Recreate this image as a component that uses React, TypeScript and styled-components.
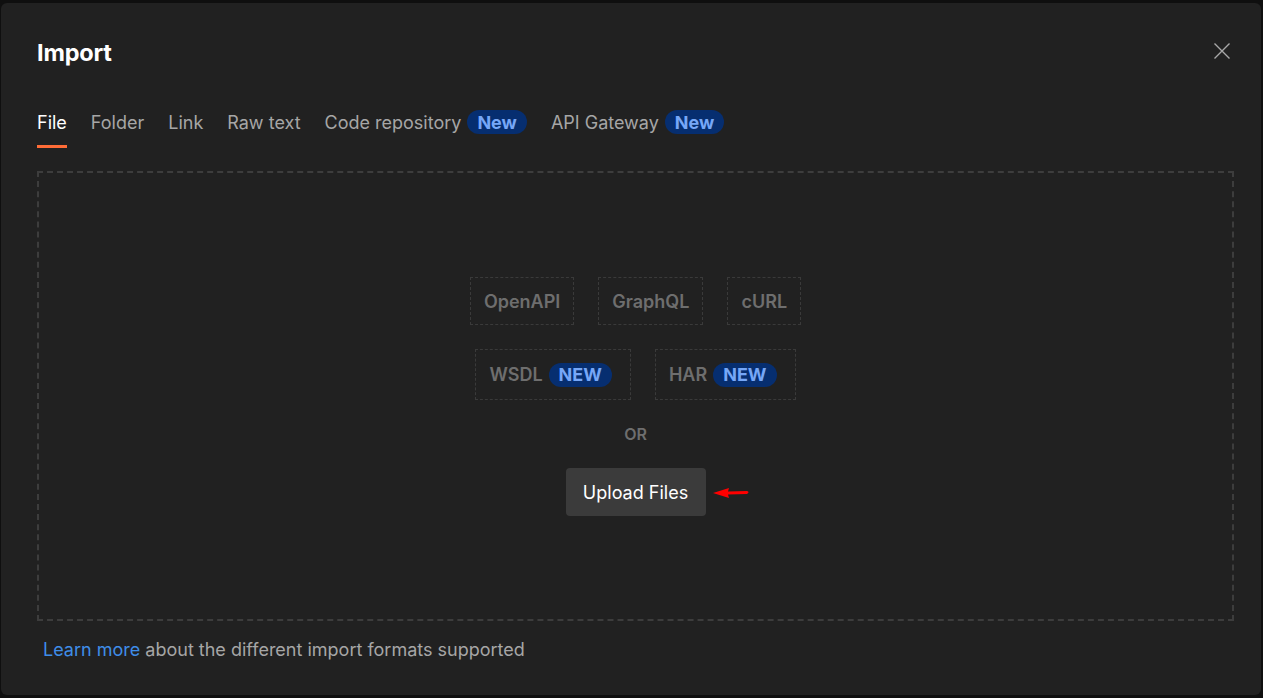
import React from "react";
import styled, { createGlobalStyle } from "styled-components";

const Global = createGlobalStyle`
  html, body { margin: 0; padding: 0; background: #0f0f0f; }
  body { font-family: Inter, "Noto Sans", sans-serif; -webkit-font-smoothing: antialiased; }
  #root { height: 698px; }
`;

const Page = styled.div`
  height: 698px;
  box-sizing: border-box;
  padding: 3px 2px 3px 1px;
  display: flex;
`;

const Modal = styled.div`
  flex: 1;
  background: #212121;
  border-radius: 6px;
  display: flex;
  flex-direction: column;
  padding: 0 27px 0 36px;
`;

const Header = styled.div`
  display: flex;
  align-items: center;
  justify-content: space-between;
  height: 99px;
`;

const Title = styled.h1`
  margin: 0;
  color: #ffffff;
  font-size: 23.5px;
  font-weight: 700;
  letter-spacing: -0.2px;
`;

const CloseButton = styled.button`
  background: none;
  border: none;
  padding: 0;
  width: 20px;
  height: 20px;
  margin: 0 2px 4px 0;
  display: flex;
  align-items: center;
  justify-content: center;
  cursor: pointer;
`;

const Tabs = styled.div`
  display: flex;
  align-items: stretch;
  gap: 24px;
  height: 46px;
`;

const Tab = styled.div<{ $active?: boolean }>`
  display: flex;
  align-items: center;
  gap: 6px;
  font-size: 18px;
  color: ${(p) => (p.$active ? "#ffffff" : "#a6a6a6")};
  font-weight: 400;
  border-bottom: 3px solid ${(p) => (p.$active ? "#ff6c37" : "transparent")};
  box-sizing: border-box;
  padding-bottom: 3px;
`;

const Badge = styled.span`
  display: inline-flex;
  align-items: center;
  justify-content: center;
  height: 24px;
  padding: 0 10px;
  border-radius: 12px;
  background: #062e70;
  color: #76a7f7;
  font-weight: 700;
  font-size: 18px;
`;

const DropZone = styled.div`
  margin-top: 23px;
  height: 450px;
  box-sizing: border-box;
  border: 2px dashed #3d3d3d;
  display: flex;
  flex-direction: column;
  align-items: center;
  padding-top: 104px;
`;

const ChipRow = styled.div`
  display: flex;
  gap: 24px;
  justify-content: center;
  & + & {
    margin-top: 24px;
  }
`;

const Chip = styled.div<{ $tall?: boolean }>`
  display: flex;
  align-items: center;
  gap: 6px;
  height: ${(p) => (p.$tall ? "51px" : "48px")};
  box-sizing: border-box;
  padding: 0 ${(p) => (p.$tall ? "18px" : "13px")} 0 13px;
  border: 1px dashed #3a3a3a;
  color: #6e6e6e;
  font-size: 18px;
  font-weight: 600;
`;

const Or = styled.div`
  color: #6e6e6e;
  font-size: 16px;
  line-height: 18px;
  font-weight: 600;
  margin-top: 25px;
`;

const UploadRow = styled.div`
  position: relative;
  margin-top: 25px;
`;

const UploadButton = styled.button`
  width: 140px;
  height: 48px;
  background: #3b3b3b;
  border: none;
  border-radius: 4px;
  color: #ffffff;
  font-family: Inter, sans-serif;
  font-size: 18px;
  cursor: pointer;
`;

const Arrow = styled.svg`
  position: absolute;
  left: 146px;
  top: 17px;
`;

const Footer = styled.div`
  margin-top: 18px;
  padding-left: 6px;
  font-size: 18px;
  line-height: 22px;
  color: #a6a6a6;
`;

const Link = styled.a`
  color: #3f8de8;
  text-decoration: none;
`;

export default function App() {
  return (
    <>
      <Global />
      <Page>
        <Modal>
          <Header>
            <Title>Import</Title>
            <CloseButton aria-label="Close">
              <svg width="18" height="18" viewBox="0 0 18 18">
                <path d="M1.5 1.5L16.5 16.5M16.5 1.5L1.5 16.5" stroke="#a8a8a8" strokeWidth="1.4" />
              </svg>
            </CloseButton>
          </Header>
          <Tabs>
            <Tab $active>File</Tab>
            <Tab>Folder</Tab>
            <Tab>Link</Tab>
            <Tab>Raw text</Tab>
            <Tab>
              Code repository <Badge>New</Badge>
            </Tab>
            <Tab>
              API Gateway <Badge>New</Badge>
            </Tab>
          </Tabs>
          <DropZone>
            <ChipRow>
              <Chip>OpenAPI</Chip>
              <Chip>GraphQL</Chip>
              <Chip>cURL</Chip>
            </ChipRow>
            <ChipRow>
              <Chip $tall>
                WSDL <Badge>NEW</Badge>
              </Chip>
              <Chip $tall>
                HAR <Badge>NEW</Badge>
              </Chip>
            </ChipRow>
            <Or>OR</Or>
            <UploadRow>
              <UploadButton>Upload Files</UploadButton>
              <Arrow width="40" height="16" viewBox="0 0 40 16">
                <path d="M1 8 L17 3 L16 6.5 L35 6 Q38 7 35 9 L16 9.5 L17 13 Z" fill="#ff0000" />
              </Arrow>
            </UploadRow>
          </DropZone>
          <Footer>
            <Link href="#">Learn more</Link> about the different import formats supported
          </Footer>
        </Modal>
      </Page>
    </>
  );
}
